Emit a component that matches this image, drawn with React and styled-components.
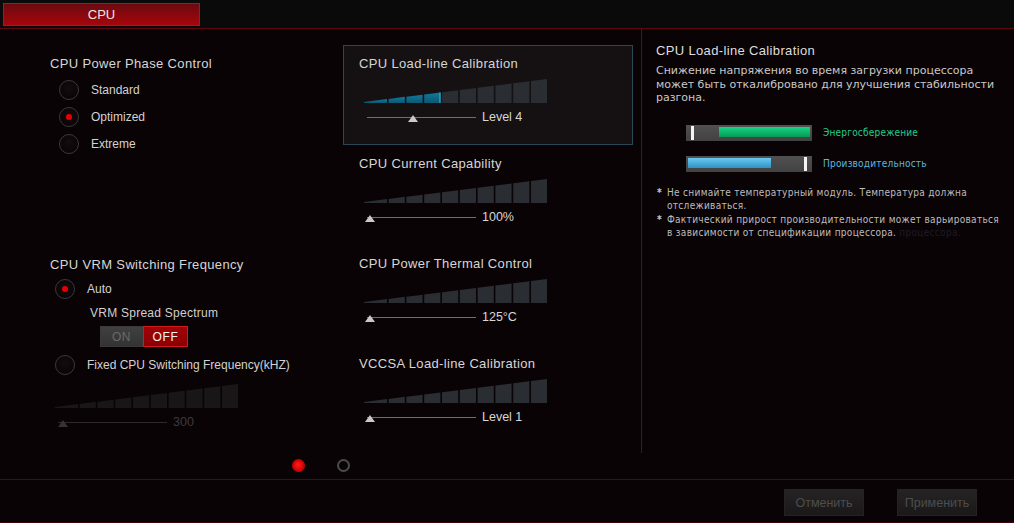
import React from 'react';
import styled, { createGlobalStyle } from 'styled-components';

const GlobalStyle = createGlobalStyle`
  html, body {
    margin: 0;
    padding: 0;
    background: #0a0305;
  }
  body {
    font-family: "Liberation Sans", Arial, sans-serif;
    color: #d2d2d2;
  }
`;

// ramp geometry: one thin wedge then nine blocks, top edge rises left to right
const RAMP_W = 183;
const RAMP_H = 24;
const SEGMENTS = (() => {
  const out = [];
  let x = 0;
  for (let i = 0; i < 10; i++) {
    const w = i === 0 ? 23 : 16.2;
    out.push([x, x + w]);
    x += w + 1.6;
  }
  return out;
})();
const topAt = (x) => RAMP_H - (1 + (23 * x) / RAMP_W);

const sliders = [
  { title: 'CPU Load-line Calibration', value: 'Level 4', filled: 4, thumb: 46, active: true },
  { title: 'CPU Current Capability', value: '100%', filled: 0, thumb: 3 },
  { title: 'CPU Power Thermal Control', value: '125°C', filled: 0, thumb: 3 },
  { title: 'VCCSA Load-line Calibration', value: 'Level 1', filled: 0, thumb: 3 },
];

const Ramp = ({ filled = 0, dim }) => (
  <RampSvg width={RAMP_W} height={RAMP_H} viewBox={`0 0 ${RAMP_W} ${RAMP_H}`}>
    <defs>
      <linearGradient id="rampFill" x1="0" y1="0" x2="0" y2="1">
        <stop offset="0" stopColor="#137899" />
        <stop offset="1" stopColor="#0b5873" />
      </linearGradient>
    </defs>
    {SEGMENTS.map(([a, b], i) => {
      const fill = dim ? '#191617' : i < filled ? 'url(#rampFill)' : '#2a2d31';
      return (
        <polygon
          key={i}
          points={`${a},${RAMP_H} ${b},${RAMP_H} ${b},${topAt(b)} ${a},${topAt(a)}`}
          fill={fill}
        />
      );
    })}
    {filled > 0 && !dim && (
      <rect
        x={SEGMENTS[filled - 1][1] - 1}
        y={topAt(SEGMENTS[filled - 1][1])}
        width="1.2"
        height={RAMP_H - topAt(SEGMENTS[filled - 1][1])}
        fill="#22b4dc"
      />
    )}
  </RampSvg>
);

const SliderBody = ({ filled, thumb, value, dim }) => (
  <>
    <Ramp filled={filled} dim={dim} />
    <SliderRow>
      <Track $dim={dim}>
        <Thumb $dim={dim} style={{ left: thumb - 5.5 }} />
      </Track>
      <SliderValue $dim={dim}>{value}</SliderValue>
    </SliderRow>
  </>
);

const Radio = ({ on, indent, children }) => (
  <RadioRow $indent={indent}>
    <RadioCircle $on={on} />
    <RadioLabel>{children}</RadioLabel>
  </RadioRow>
);

const App = () => {
  return (
    <Screen>
      <GlobalStyle />
      <TopBar>
        <Tab>CPU</Tab>
      </TopBar>

      <Main>
        <LeftPane>
          <Columns>
            <SettingsColumn>
              <GroupTitle>CPU Power Phase Control</GroupTitle>
              <RadioList>
                <Radio indent={9}>Standard</Radio>
                <Radio indent={9} on>Optimized</Radio>
                <Radio indent={9}>Extreme</Radio>
              </RadioList>

              <VrmGroup>
                <GroupTitle>CPU VRM Switching Frequency</GroupTitle>
                <RadioList $tight>
                  <Radio indent={5} on>Auto</Radio>
                </RadioList>
                <SubTitle>VRM Spread Spectrum</SubTitle>
                <Toggle>
                  <ToggleSide>ON</ToggleSide>
                  <ToggleSide $on>OFF</ToggleSide>
                </Toggle>
                <RadioList>
                  <Radio indent={5}>Fixed CPU Switching Frequency(kHZ)</Radio>
                </RadioList>
                <DimSlider>
                  <SliderBody dim filled={0} thumb={5} value="300" />
                </DimSlider>
              </VrmGroup>
            </SettingsColumn>

            <SliderColumn>
              {sliders.map((s) => (
                <SliderBlock key={s.title} $active={s.active}>
                  <BlockTitle>{s.title}</BlockTitle>
                  <SliderBody filled={s.filled} thumb={s.thumb} value={s.value} />
                </SliderBlock>
              ))}
            </SliderColumn>
          </Columns>

          <Pager>
            <Dot $on />
            <Dot />
          </Pager>
        </LeftPane>

        <RightPane>
          <PanelTitle>CPU Load-line Calibration</PanelTitle>
          <Description>
            Снижение напряжения во время загрузки процессора может быть откалибровано для улучшения
            стабильности разгона.
          </Description>

          <Meters>
            <MeterRow>
              <Meter>
                <MeterFill $color="green" style={{ left: 33, width: 91 }} />
                <MeterMark style={{ left: 5 }} />
              </Meter>
              <MeterLabel $color="#1fcb8b">Энергосбережение</MeterLabel>
            </MeterRow>
            <MeterRow>
              <Meter>
                <MeterFill $color="blue" style={{ left: 2, width: 83 }} />
                <MeterMark style={{ left: 118 }} />
              </Meter>
              <MeterLabel $color="#5db8df">Производительность</MeterLabel>
            </MeterRow>
          </Meters>

          <Notes>
            <Note>
              <Star>*</Star>
              <span>Не снимайте температурный модуль. Температура должна отслеживаться.</span>
            </Note>
            <Note>
              <Star>*</Star>
              <span>
                Фактический прирост производительности может варьироваться в зависимости от
                спецификации процессора.<Ghost> процессора.</Ghost>
              </span>
            </Note>
          </Notes>
        </RightPane>
      </Main>

      <Footer>
        <FooterButton>Отменить</FooterButton>
        <FooterButton>Применить</FooterButton>
      </Footer>
    </Screen>
  );
};

export default App;

const Screen = styled.div`
  width: 1014px;
  height: 523px;
  display: flex;
  flex-direction: column;
  background: #0a0305;
  overflow: hidden;
`;

const TopBar = styled.div`
  height: 25px;
  flex-shrink: 0;
  background: #0b0a0a;
  border-bottom: 1px solid #5e0710;
  display: flex;
  align-items: flex-start;
  padding: 3px 0 0 3px;
`;

const Tab = styled.div`
  width: 195px;
  height: 21px;
  border: 1px solid #b3121b;
  background: linear-gradient(#6c0a0f, #a5060c);
  color: #f1e6e6;
  font-size: 13px;
  display: flex;
  align-items: center;
  justify-content: center;
`;

const Main = styled.div`
  height: 450px;
  flex-shrink: 0;
  display: flex;
  border-bottom: 1px solid #4f0711;
`;

const LeftPane = styled.div`
  width: 641px;
  flex-shrink: 0;
  display: flex;
  flex-direction: column;
`;

const Columns = styled.div`
  flex: 1;
  display: grid;
  grid-template-columns: 293px 290px;
  padding: 16px 0 0 50px;
`;

const SettingsColumn = styled.div`
  display: flex;
  flex-direction: column;
  padding-top: 11px;
`;

const GroupTitle = styled.div`
  font-size: 13px;
  line-height: 16px;
  letter-spacing: 0.35px;
  color: #d6d6d6;
`;

const RadioList = styled.div`
  display: flex;
  flex-direction: column;
  margin-top: ${(p) => (p.$tight ? 2 : 4)}px;
`;

const RadioRow = styled.div`
  height: 27px;
  display: flex;
  align-items: center;
  gap: 12px;
  padding-left: ${(p) => p.$indent}px;
`;

const RadioCircle = styled.span`
  width: 20px;
  height: 20px;
  box-sizing: border-box;
  border-radius: 50%;
  border: 1.5px solid #3a3a3a;
  background: radial-gradient(circle at 50% 40%, #140c0e, #070203);
  display: flex;
  align-items: center;
  justify-content: center;

  &::after {
    content: '';
    width: 6px;
    height: 6px;
    border-radius: 50%;
    background: #e80000;
    display: ${(p) => (p.$on ? 'block' : 'none')};
  }
`;

const RadioLabel = styled.span`
  font-size: 12px;
  color: #d2d2d2;
`;

const VrmGroup = styled.div`
  display: flex;
  flex-direction: column;
  margin-top: 100px;
`;

const SubTitle = styled.div`
  font-size: 12px;
  line-height: 16px;
  letter-spacing: 0.25px;
  color: #d0d0d0;
  margin: 3px 0 0 40px;
`;

const Toggle = styled.div`
  display: flex;
  width: 88px;
  height: 21px;
  margin: 5px 0 0 50px;
`;

const ToggleSide = styled.div`
  flex: ${(p) => (p.$on ? '0 0 45px' : '0 0 43px')};
  box-sizing: border-box;
  display: flex;
  align-items: center;
  justify-content: center;
  font-size: 12px;
  letter-spacing: 0.6px;
  color: ${(p) => (p.$on ? '#f2f2f2' : '#6a6a6a')};
  background: ${(p) =>
    p.$on ? 'linear-gradient(#a00207, #8c0003)' : 'linear-gradient(#404040, #333)'};
  border: 1px solid ${(p) => (p.$on ? '#cf1a1f' : '#3a3a3a')};
`;

const DimSlider = styled.div`
  margin-top: 6px;
`;

const SliderColumn = styled.div`
  display: flex;
  flex-direction: column;
`;

const SliderBlock = styled.div`
  height: 100px;
  box-sizing: border-box;
  padding: 10px 15px 0;
  border: 1px solid ${(p) => (p.$active ? '#2b4753' : 'transparent')};
  background: ${(p) => (p.$active ? '#151012' : 'transparent')};
`;

const BlockTitle = styled.div`
  font-size: 13px;
  line-height: 16px;
  letter-spacing: 0.35px;
  color: #d6d6d6;
  margin-bottom: 7px;
`;

const RampSvg = styled.svg`
  display: block;
  margin-left: 5px;
`;

const SliderRow = styled.div`
  display: flex;
  align-items: center;
  height: 16px;
  margin: 6px 0 0 8px;
`;

const Track = styled.div`
  position: relative;
  width: 109px;
  height: 16px;

  &::before {
    content: '';
    position: absolute;
    left: 0;
    right: 0;
    top: 8px;
    height: 1px;
    background: ${(p) => (p.$dim ? '#2c2a2b' : '#6e6e6e')};
  }
`;

const Thumb = styled.span`
  position: absolute;
  top: 6px;
  width: 0;
  height: 0;
  border-left: 5.5px solid transparent;
  border-right: 5.5px solid transparent;
  border-bottom: 7px solid ${(p) => (p.$dim ? '#343233' : '#c9c9c9')};
`;

const SliderValue = styled.span`
  margin-left: 6px;
  font-size: 12.5px;
  color: ${(p) => (p.$dim ? '#3c3a3b' : '#d8d8d8')};
`;

const Pager = styled.div`
  height: 28px;
  display: flex;
  align-items: center;
  justify-content: center;
  gap: 32px;
`;

const Dot = styled.span`
  width: 13px;
  height: 13px;
  box-sizing: border-box;
  border-radius: 50%;
  background: ${(p) => (p.$on ? 'radial-gradient(circle at 45% 40%, #ff1a1a, #c80000)' : 'transparent')};
  border: 2px solid ${(p) => (p.$on ? '#d00000' : '#4c4c4c')};
`;

const RightPane = styled.div`
  flex: 1;
  align-self: flex-start;
  height: 424px;
  box-sizing: border-box;
  border-left: 1px solid #2b2426;
  padding: 14px 10px 0 14px;
  display: flex;
  flex-direction: column;
`;

const PanelTitle = styled.div`
  font-size: 13px;
  line-height: 16px;
  letter-spacing: 0.35px;
  color: #dedede;
`;

const Description = styled.div`
  margin-top: 5px;
  font-family: "DejaVu Sans", Verdana, sans-serif;
  font-size: 11px;
  line-height: 13.5px;
  color: #c8c8c8;
`;

const Meters = styled.div`
  display: flex;
  flex-direction: column;
  gap: 15px;
  margin: 20px 0 0 30px;
`;

const MeterRow = styled.div`
  display: flex;
  align-items: center;
  gap: 11px;
`;

const Meter = styled.div`
  position: relative;
  width: 126px;
  height: 16px;
  background: linear-gradient(#505050, #424242);
`;

const MeterFill = styled.span`
  position: absolute;
  top: 2px;
  height: 10px;
  background: ${(p) =>
    p.$color === 'green'
      ? 'linear-gradient(#17d585, #069a55)'
      : 'linear-gradient(#6cc9f2, #2c93c4)'};
`;

const MeterMark = styled.span`
  position: absolute;
  top: 1px;
  bottom: 1px;
  width: 3px;
  background: #f4f4f4;
`;

const MeterLabel = styled.span`
  font-family: "DejaVu Sans Condensed", "DejaVu Sans", Verdana, sans-serif;
  font-size: 10px;
  letter-spacing: 0.2px;
  color: ${(p) => p.$color};
`;

const Notes = styled.div`
  display: flex;
  flex-direction: column;
  gap: 1px;
  margin-top: 14px;
`;

const Note = styled.div`
  display: grid;
  grid-template-columns: 11px 1fr;
  font-family: "DejaVu Sans Condensed", "DejaVu Sans", Verdana, sans-serif;
  font-size: 10px;
  line-height: 13px;
  letter-spacing: 0.3px;
  color: #bdbdbd;
`;

const Star = styled.span`
  font-weight: bold;
  color: #cfcfcf;
  padding-left: 1px;
`;

const Ghost = styled.span`
  color: #1d1b25;
  white-space: nowrap;
`;

const Footer = styled.div`
  flex: 1;
  display: flex;
  justify-content: flex-end;
  align-items: flex-start;
  gap: 33px;
  padding: 9px 37px 0 0;
  border-bottom: 1px solid #3a0509;
`;

const FooterButton = styled.div`
  width: 80px;
  height: 27px;
  box-sizing: border-box;
  display: flex;
  align-items: center;
  justify-content: center;
  background: linear-gradient(#252323, #1a1818);
  border: 1px solid #242222;
  color: #4d4d4d;
  font-size: 12.5px;
`;
